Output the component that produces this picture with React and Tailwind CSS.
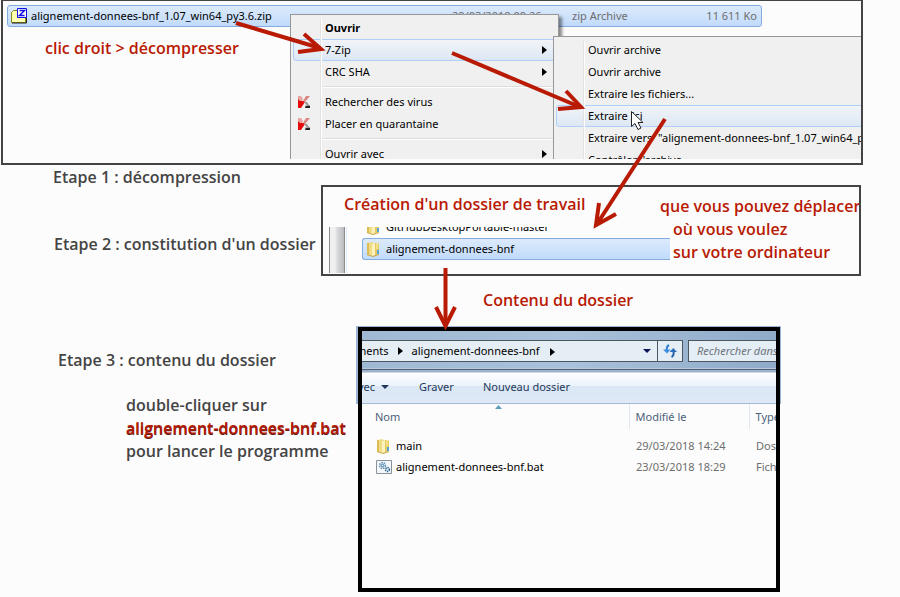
import clsx from 'clsx';

const Folder = () => (
  <svg width="14" height="16" viewBox="0 0 14 16" className="shrink-0" aria-hidden="true">
    <path d="M1 2l6-1v14l-6-2z" fill="#f0dc85" />
    <path d="M1 2l2 0v12l-2-1z" fill="#dcbc55" />
    <path d="M7 2h5l1 1v10l-6 2z" fill="#e6c95e" />
    <path d="M6 3l3-1v12l-3 1z" fill="#fbf2bd" />
    <path d="M10 2h2v6h-2z" fill="#f3e08a" />
    <path d="M11 9h2v4h-2z" fill="#56a3d8" />
    <path d="M1 13.500l6 2 6-2" fill="none" stroke="#c9a83c" />
  </svg>
);

const ZipIcon = () => (
  <svg width="16" height="16" viewBox="0 0 16 16" className="shrink-0" aria-hidden="true">
    <path d="M.500 14.500v-10l2-2h4v2h8v10z" fill="#ffffb0" stroke="#8a8a1c" />
    <path d="M1 15h14.500V9" fill="none" stroke="#222" />
    <path d="M6.500.500h9v9h-9z" fill="#fff" stroke="#1010e8" />
    <path d="M8.500 2.500h5l-5 5h5" fill="none" stroke="#1010e8" strokeWidth="1.500" />
  </svg>
);

const VirusIcon = () => (
  <svg width="13" height="13" viewBox="0 0 13 13" aria-hidden="true">
    <path d="M0 0h3v4z" fill="#e9a5a0" />
    <path d="M0 0h3l2 3-1 2H0z" fill="#e9a5a0" />
    <path d="M5 5l3-5h4L7 6z" fill="#d98680" />
    <path d="M0 3l2 2h3l2 1-4 6H0z" fill="#e60c0c" />
    <path d="M6 6l3 0 2 3h1v3H7V9.500h2z" fill="#9a9a9a" />
    <path d="M8 10h4v2H7z" fill="#222" />
  </svg>
);

const BatIcon = () => (
  <svg width="16" height="14" viewBox="0 0 16 14" className="shrink-0" aria-hidden="true">
    <path d="M.500.500h15v13H.500z" fill="#f4f8fb" stroke="#8b929b" />
    <circle cx="6.500" cy="5.500" r="3" fill="#dcebf5" stroke="#6c93b4" strokeWidth="1.500" strokeDasharray="1.500 1" />
    <circle cx="6.500" cy="5.500" r="1.300" fill="none" stroke="#4d7da6" />
    <circle cx="11.500" cy="9.500" r="2" fill="#cfe2f0" stroke="#33658f" strokeWidth="1.500" strokeDasharray="1.300 .8" />
  </svg>
);

const Triangle = ({ className }) => (
  <svg width="5" height="8" viewBox="0 0 5 8" className={className} aria-hidden="true">
    <path d="M0 0l5 4-5 4z" fill="currentColor" />
  </svg>
);

const Down = ({ className }) => (
  <svg width="8" height="4" viewBox="0 0 8 4" className={className} aria-hidden="true">
    <path d="M0 0h8L4 4z" fill="currentColor" />
  </svg>
);

const MenuItem = ({ children, icon, arrow, bold, active }) => (
  <button
    type="button"
    className={clsx(
      'mx-[2px] flex h-[22px] items-center rounded-[3px] border pr-2 text-left whitespace-pre',
      active ? 'border-[#aecff7] bg-linear-to-b from-[#f1f4f8] to-[#dde8f4]' : 'border-transparent',
      bold && 'font-bold',
    )}
  >
    <span className="flex w-[31px] shrink-0 pl-1">{icon}</span>
    <span className="flex-1">{children}</span>
    {arrow && <Triangle className="text-black" />}
  </button>
);

const Separator = () => <div className="my-[3px] ml-[30px] h-[2px] border-t border-[#dcdcdc] bg-white" />;

const Arrow = ({ line, head }) => (
  <g fill="none" stroke="#b81a04" strokeWidth="4">
    <path d={line} />
    <path d={head} />
  </g>
);

function ZipPanel() {
  return (
    <section className="relative mr-[37px] ml-px h-[165px] overflow-hidden border-2 border-t border-[#444] pb-1">
      <div className="relative h-full overflow-hidden">
        <div className="mt-1 ml-1 flex h-[22px] w-[755px] items-center rounded-[3px] border border-[#84acdd] bg-linear-to-b from-[#dceafb] to-[#c1dbfc] pr-1 pl-[3px]">
          <ZipIcon />
          <span className="ml-1 w-[421px] text-black">alignement-donnees-bnf_1.07_win64_py3.6.zip</span>
          <span className="w-[120px] text-[#6d6d6d]">29/03/2018 09:26</span>
          <span className="flex-1 text-[#6d6d6d]">zip Archive</span>
          <span className="text-[#6d6d6d]">11 611 Ko</span>
        </div>
        <p className="mt-[9px] ml-[42px] text-base font-semibold text-[#b81a04]">clic droit &gt; décompresser</p>

        <div className="absolute top-[13px] left-[287px] flex w-[269px] flex-col border border-[#979797] bg-[#f0f0f0] pt-[2px] pb-3 shadow-[3px_3px_3px_#0007]">
          <div className="absolute inset-y-1 left-[29px] w-[2px] border-l border-[#e0e2e4] bg-white" />
          <MenuItem bold>Ouvrir</MenuItem>
          <MenuItem arrow active>7-Zip</MenuItem>
          <MenuItem arrow>CRC SHA</MenuItem>
          <Separator />
          <MenuItem icon={<VirusIcon />}>Rechercher des virus</MenuItem>
          <MenuItem icon={<VirusIcon />}>Placer en quarantaine</MenuItem>
          <Separator />
          <MenuItem arrow>Ouvrir avec</MenuItem>
        </div>

        <div className="absolute top-[35px] -right-2 left-[550px] flex flex-col border border-[#979797] bg-[#f0f0f0] pt-[2px]">
          <div className="absolute inset-y-1 left-[29px] w-[2px] border-l border-[#e0e2e4] bg-white" />
          <MenuItem>Ouvrir archive</MenuItem>
          <MenuItem>Ouvrir archive</MenuItem>
          <MenuItem>Extraire les fichiers...</MenuItem>
          <MenuItem active>Extraire Ici</MenuItem>
          <MenuItem>{'Extraire vers  "alignement-donnees-bnf_1.07_win64_py3.6\\"'}</MenuItem>
          <MenuItem>Contrôler l'archive</MenuItem>
        </div>
      </div>
    </section>
  );
}

function WorkFolderPanel() {
  return (
    <section className="flex h-[91px] overflow-hidden border-2 border-[#444]">
      <div className="flex w-[337px] shrink-0 flex-col pt-[5px] pl-[6px]">
        <h2 className="ml-[15px] text-base whitespace-nowrap text-[#b81a04]">Création d'un dossier de travail</h2>
        <div className="mt-[11px] flex h-[46px] w-[341px]">
          <div className="w-[16px] border-x border-[#8c8c8c] bg-linear-to-r from-[#f0f0f0] from-35% via-[#dcdcde] to-[#b9bbbf]" />
          <div className="mr-[15px] w-[2px] border-r border-[#dcebfb]" />
          <div className="flex flex-1 flex-col justify-end overflow-hidden pb-[13px]">
            <div className="flex h-[22px] shrink-0 items-center pl-1">
              <Folder />
              <span className="ml-[6px]">GitHubDesktopPortable-master</span>
            </div>
            <div className="flex h-[22px] shrink-0 items-center rounded-l-[3px] border border-r-0 border-[#84acdd] bg-linear-to-b from-[#dceafb] to-[#c1dbfc] pl-[3px]">
              <Folder />
              <span className="ml-[6px]">alignement-donnees-bnf</span>
            </div>
          </div>
        </div>
      </div>
      <p className="pt-2 text-base leading-[23px] font-semibold whitespace-nowrap text-[#b81a04]">
        que vous pouvez déplacer
        <span className="ml-[13px] block">où vous voulez</span>
        <span className="ml-[13px] block">sur votre ordinateur</span>
      </p>
    </section>
  );
}

function ExplorerWindow() {
  return (
    <section className="ml-[35px] h-[266px] w-[425px] bg-[linear-gradient(to_bottom,#9cb7d5_0,#9cb7d5_78px,#fcfcfc_78px)] pt-px pr-px pl-[2px]">
      <div className="h-full overflow-hidden border-4 border-black bg-[#fcfcfc]">
        <div className="flex h-[38px] items-center gap-[5px] border-b border-[#b9cadd] bg-linear-to-r from-[#9fb9d4] via-[#a9c1da] to-[#8fabc9] pt-[2px]">
          <div className="flex h-[22px] w-[321px] shrink-0 items-center border border-l-0 border-[#4b5663] bg-[#e5edf5]">
            <span className="-ml-[6px]">ments</span>
            <Triangle className="mx-[9px]" />
            <span className="flex-1">
              alignement-donnees-bnf
              <Triangle className="ml-[10px] inline" />
            </span>
            <button type="button" aria-label="Dossiers récents" className="mr-[6px]">
              <Down className="text-[#0a1258]" />
            </button>
            <button type="button" aria-label="Actualiser" className="flex h-full w-[25px] items-center justify-center border-l border-[#4b5663]">
              <svg width="14" height="14" viewBox="0 0 14 14" fill="none" aria-hidden="true">
                <path d="M6 1C4 2 3.500 4 3.800 7" stroke="#2f7fd0" strokeWidth="2" />
                <path d="M0 5.500h7.500L4 9.500z" fill="#3c8bdc" />
                <path d="M8.500 13c2-1 2.500-3 2-6" stroke="#235fa8" strokeWidth="2" />
                <path d="M6.500 8H14l-3.700-4z" fill="#2a6dbd" />
              </svg>
            </button>
          </div>
          <input
            aria-label="Rechercher"
            placeholder="Rechercher dans"
            className="h-[22px] w-[160px] shrink-0 border border-[#4b5663] bg-[#e5edf5] pl-2 italic placeholder:text-[#6c737b]"
          />
        </div>
        <div className="flex h-[35px] items-center border-t border-b border-t-[#4f6178] border-b-[#a3b8d2] bg-[linear-gradient(to_bottom,#9fb3ca_0,#9fb3ca_2px,#fdfdfe_3px,#eaf2fb_50%,#dbe7f5_50%,#dfe9f6)] pt-px text-[#1e395b]">
          <button type="button" className="-ml-1 flex w-[61px] items-center">
            vec
            <Down className="ml-[6px]" />
          </button>
          <button type="button" className="w-[64px] text-left">Graver</button>
          <button type="button" className="whitespace-nowrap">Nouveau dossier</button>
        </div>
        <table className="relative w-[500px] table-fixed text-left text-[#6d6d6d]">
          <thead>
            <tr className="h-[25px] align-middle text-[#4c607a]">
              <th className="w-[267px] pl-[13px] font-normal">
                Nom
                <svg width="7" height="4" viewBox="0 0 7 4" className="absolute top-px left-[133px]" aria-hidden="true">
                  <path d="M3.500 0L7 4H0z" fill="#5f9cbd" />
                </svg>
              </th>
              <th className="w-[120px] border-l border-[#dfe8f2] pl-[6px] font-normal">Modifié le</th>
              <th className="border-l border-[#dfe8f2] pl-[6px] font-normal">Type</th>
            </tr>
          </thead>
          <tbody>
            <tr aria-hidden="true" className="h-[6px]" />
            <tr className="h-[21px]">
              <td className="pl-[14px]">
                <span className="flex items-center gap-[6px] text-black"><Folder />main</span>
              </td>
              <td className="pl-[7px]">29/03/2018 14:24</td>
              <td className="pl-[7px]">Dossier</td>
            </tr>
            <tr className="h-[21px]">
              <td className="pl-[14px]">
                <span className="flex items-center gap-1 text-black"><BatIcon />alignement-donnees-bnf.bat</span>
              </td>
              <td className="pl-[7px]">23/03/2018 18:29</td>
              <td className="pl-[7px]">Fichier</td>
            </tr>
          </tbody>
        </table>
      </div>
    </section>
  );
}

export default function App() {
  return (
    <main className="relative min-h-screen overflow-hidden bg-[#fcfcfc] font-['Noto_Sans','Open_Sans',sans-serif] text-[11px] leading-4 text-black [&_h2]:font-['Open_Sans'] [&_h2]:font-semibold [&_p]:font-['Open_Sans']">
      <ZipPanel />
      <div className="flex">
        <div className="w-[321px] shrink-0 whitespace-nowrap text-[#444]">
          <h2 className="ml-[53px] text-base">Etape 1 : décompression</h2>
          <h2 className="mt-[43px] ml-[54px] text-base">Etape 2 : constitution d'un dossier</h2>
          <h2 className="mt-[92px] ml-[58px] text-base">Etape 3 : contenu du dossier</h2>
          <p className="mt-[22px] ml-[126px] text-base leading-[23px] font-semibold">
            double-cliquer sur
            <strong className="block font-semibold text-[#b81a04] [text-shadow:0_1px_0_#5a2018]">alignement-donnees-bnf.bat</strong>
            pour lancer le programme
          </p>
        </div>
        <div className="mr-[39px] min-w-0 flex-1 pt-5">
          <WorkFolderPanel />
          <h2 className="mt-3 mb-[14px] ml-[162px] text-base text-[#b81a04]">Contenu du dossier</h2>
          <ExplorerWindow />
        </div>
      </div>

      <svg width="900" height="597" viewBox="0 0 900 597" className="pointer-events-none absolute top-0 left-0" aria-hidden="true">
        <Arrow line="M236 23L320 48" head="M304 34L321 49L298 52" />
        <Arrow line="M452 53L580 107" head="M566 91L581 107L558 109" />
        <Arrow line="M665 119L597 224" head="M599 203L596 225L616 214" />
        <Arrow line="M445.500 268V326" head="M436 307L445.500 326L455 307" />
        <path d="M631.500 111.500v15l3.500-3 3 6 3-1.500-3-5.500h5z" fill="#fff" stroke="#222" />
      </svg>
    </main>
  );
}
